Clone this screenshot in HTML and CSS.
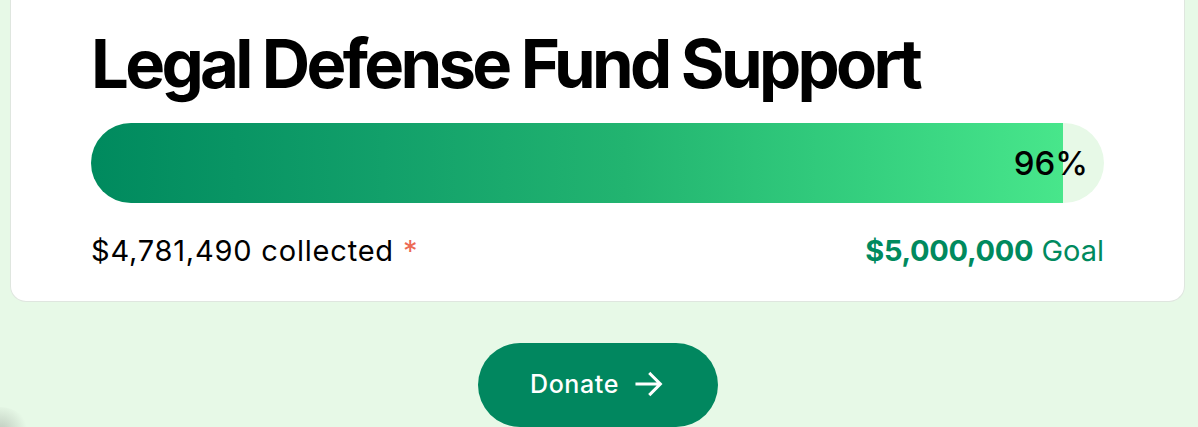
FILE: index.html
```html
<!DOCTYPE html>
<html>
<head>
<meta charset="utf-8">
<link rel="stylesheet" href="styles.css">
</head>
<body>
<div class="page">
  <section class="card">
    <h1 class="title">Legal Defense Fund Support</h1>
    <div class="track">
      <div class="fill" style="width:96%"></div>
      <span class="pct">96%</span>
    </div>
    <div class="stats">
      <div class="collected">$4,781,490 collected <span class="star">*</span></div>
      <div class="goal"><strong>$5,000,000</strong> Goal</div>
    </div>
  </section>
  <div class="actions">
    <button class="donate">Donate
      <svg class="arrow" width="32" height="32" viewBox="0 0 24 24" fill="none" stroke="currentColor" stroke-width="2.3" stroke-linecap="square" stroke-linejoin="miter"><path d="M3 12h17M13 4.5l7.5 7.5-7.5 7.5"/></svg>
    </button>
  </div>
  <div class="blob"></div>
</div>
</body>
</html>
```
FILE: styles.css
```css
html, body {
  margin: 0;
  padding: 0;
  background: #e7f9e7;
  height: 100%;
  overflow: hidden;
}
.page {
  font-family: Inter, "Noto Sans", sans-serif;
  padding: 0 13px 0 10px;
  position: relative;
  height: 427px;
  overflow: hidden;
  box-sizing: border-box;
}
.card {
  background: #fff;
  border: 1px solid #dfe6df;
  border-top: none;
  border-radius: 0 0 16px 16px;
  padding: 22px 80px 30px 80px;
}
.title {
  margin: 0;
  font-size: 67px;
  font-weight: 700;
  letter-spacing: -3.7px;
  line-height: 84px;
  color: #000;
}
.track {
  margin-top: 17px;
  height: 80px;
  border-radius: 40px;
  background: #e7f9e7;
  overflow: hidden;
  position: relative;
  display: flex;
  align-items: center;
  justify-content: flex-end;
}
.fill {
  position: absolute;
  left: 0;
  top: 0;
  bottom: 0;
  background: linear-gradient(90deg, #008a5e 0%, #12a06a 30%, #22b470 55%, #35d07f 80%, #48e68b 100%);
}
.pct {
  position: relative;
  font-size: 33px;
  font-weight: 500;
  color: #000;
  padding-right: 16px;
}
.stats {
  display: flex;
  justify-content: space-between;
  align-items: baseline;
  margin-top: 28px;
  font-size: 29px;
  line-height: 40px;
}
.collected { color: #000; letter-spacing: 0.8px; }
.star { color: #ec6a55; }
.goal { color: #008a5e; }
.goal strong { font-weight: 700; letter-spacing: -0.3px; }
.actions {
  display: flex;
  justify-content: center;
  padding-top: 41px;
}
.donate {
  width: 240px;
  height: 84px;
  border: none;
  border-radius: 42px;
  background: #01875f;
  color: #fff;
  font-family: Inter, sans-serif;
  font-size: 25px;
  font-weight: 500;
  letter-spacing: 0.6px;
  display: flex;
  align-items: center;
  justify-content: center;
  gap: 14px;
  padding: 0 0 3px 0;
}
.blob {
  position: absolute;
  left: -30px;
  bottom: -30px;
  width: 60px;
  height: 50px;
  border-radius: 50%;
  background: radial-gradient(circle, rgba(160,170,160,0.6), rgba(230,249,230,0) 70%);
}
```
